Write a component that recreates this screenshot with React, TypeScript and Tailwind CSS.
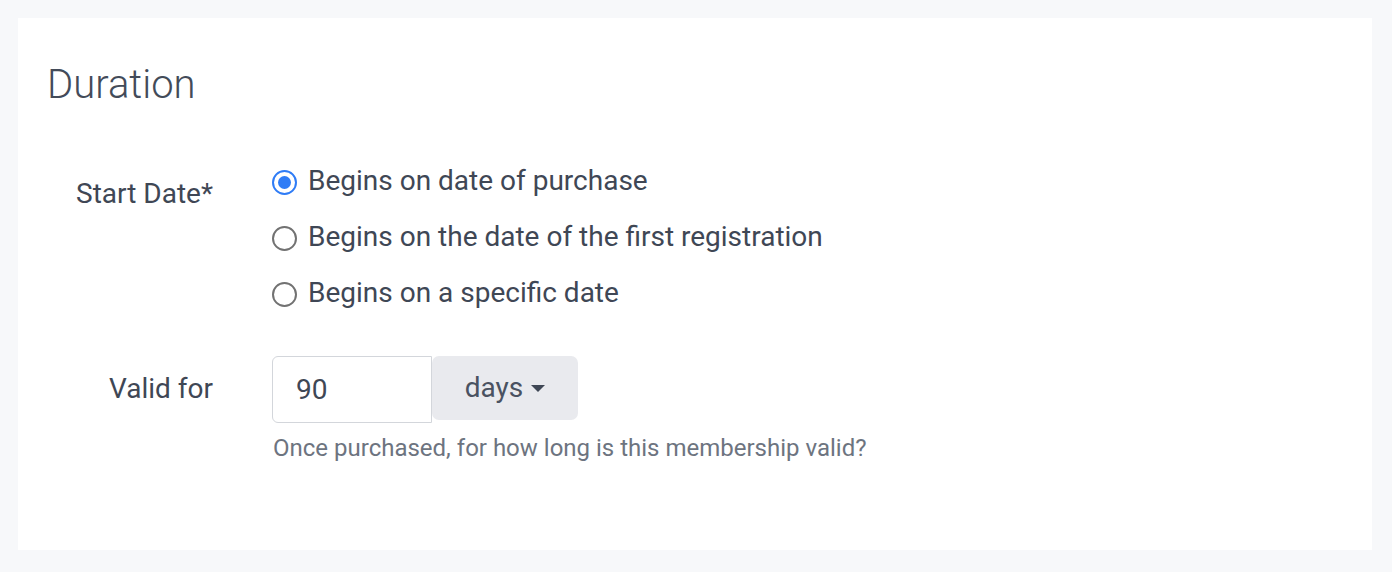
import React from "react";

function Radio({ checked }: { checked?: boolean }) {
  if (checked) {
    return (
      <span className="flex h-[25px] w-[25px] shrink-0 items-center justify-center rounded-full border-[2.5px] border-[#2f7cf6] bg-white">
        <span className="h-[13px] w-[13px] rounded-full bg-[#2f7cf6]" />
      </span>
    );
  }
  return <span className="h-[25px] w-[25px] shrink-0 rounded-full border-2 border-[#727272] bg-white" />;
}

export default function App() {
  const options = [
    { label: "Begins on date of purchase", checked: true },
    { label: "Begins on the date of the first registration", checked: false },
    { label: "Begins on a specific date", checked: false },
  ];
  return (
    <div
      className="h-[572px] w-full bg-[#f7f8fa] pl-[18px] pt-[18px] text-[#3f4755]"
      style={{ fontFamily: "Roboto, 'Liberation Sans', sans-serif" }}
    >
      <div className="h-[532px] w-[1354px] bg-white pt-[43px]">
        <h2 className="pl-[29px] text-[40px] font-light leading-[48px] text-[#434b59]">Duration</h2>

        <div className="mt-[51px] flex items-start">
          <div className="w-[195px] pt-[13px] text-right text-[28px] leading-[42px]">Start Date*</div>
          <div className="ml-[59px] flex flex-col gap-[14px]">
            {options.map((o) => (
              <label key={o.label} className="flex h-[42px] items-center gap-[11px] text-[28px] leading-[42px]">
                <span className="mt-[2px] flex">
                  <Radio checked={o.checked} />
                </span>
                <span>{o.label}</span>
              </label>
            ))}
          </div>
        </div>

        <div className="mt-[42px] flex items-start">
          <div className="w-[195px] pt-[12px] text-right text-[28px] leading-[42px]">Valid for</div>
          <div className="ml-[59px] flex flex-col">
            <div className="flex items-start">
              <div className="flex h-[67px] w-[160px] items-center rounded-l-[6px] border border-[#d3d6db] pl-[23px] pt-[1px] text-[28px] text-[#3f4755]">
                90
              </div>
              <div className="flex h-[64px] w-[146px] items-center justify-center gap-[8px] rounded-[7px] bg-[#e9eaee] text-[28px] text-[#4a5261]">
                <span>days</span>
                <span className="mt-[1px] h-0 w-0 border-x-[7px] border-t-[7px] border-x-transparent border-t-[#3f4755]" />
              </div>
            </div>
            <div className="mt-[7px] pl-px text-[24px] leading-[36px] text-[#6d7480]">
              Once purchased, for how long is this membership valid?
            </div>
          </div>
        </div>
      </div>
    </div>
  );
}
